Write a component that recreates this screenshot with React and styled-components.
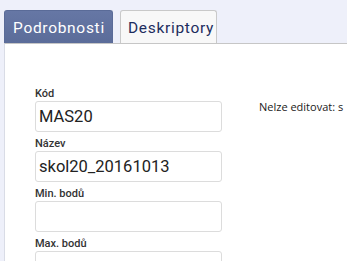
import styled, { createGlobalStyle } from 'styled-components';

const GlobalStyle = createGlobalStyle`
  html, body {
    margin: 0;
    padding: 0;
    background: #eef0fa;
  }
  body {
    font-family: Roboto, 'Liberation Sans', sans-serif;
  }
`;

const Page = styled.div`
  width: 347px;
  height: 261px;
  overflow: hidden;
  display: flex;
  flex-direction: column;
  padding-top: 10px;
  box-sizing: border-box;
`;

const TabBar = styled.div`
  display: flex;
  gap: 7px;
  padding-left: 4px;
`;

const Tab = styled.div`
  height: 33px;
  box-sizing: border-box;
  padding: 1px 0 0 ${(p) => (p.$active ? '8px' : '7px')};
  width: ${(p) => (p.$active ? '109px' : '97px')};
  display: flex;
  align-items: center;
  border-radius: 3px 3px 0 0;
  font-size: 15.5px;
  letter-spacing: 0.7px;
  background: ${(p) => (p.$active ? 'linear-gradient(#6677a5, #5b6c99)' : '#f8f8f8')};
  color: ${(p) => (p.$active ? '#ffffff' : '#1d2d5e')};
  border: 1px solid ${(p) => (p.$active ? '#5a6b98' : '#c9c9c9')};
  border-bottom: none;
`;

const Panel = styled.div`
  flex: 1;
  margin-left: 4px;
  background: #fff;
  border-top: 1px solid #c6c6c6;
  border-left: 1px solid #d9dce6;
  display: flex;
  padding: 44px 0 0 30px;
  gap: 37px;
`;

const Form = styled.div`
  display: flex;
  flex-direction: column;
  gap: 6px;
  width: 187px;
`;

const Label = styled.div`
  font-size: 11px;
  font-weight: 500;
  color: #333;
  height: 12px;
  line-height: 12px;
  margin-bottom: 1px;
`;

const Input = styled.div`
  height: 31px;
  box-sizing: border-box;
  border: 1px solid #dcdcdc;
  border-radius: 3px;
  padding: 0 3px;
  display: flex;
  align-items: center;
  font-size: 16.5px;
  color: #222;
`;

const Note = styled.div`
  margin-top: 11px;
  font-family: 'Open Sans', 'Noto Sans', sans-serif;
  font-size: 11px;
  color: #1a1a1a;
  white-space: nowrap;
`;

const fields = [
  { label: 'Kód', value: 'MAS20' },
  { label: 'Název', value: 'skol20_20161013' },
  { label: 'Min. bodů', value: '' },
  { label: 'Max. bodů', value: '' },
];

export default function App() {
  return (
    <>
      <GlobalStyle />
      <Page>
        <TabBar>
          <Tab $active>Podrobnosti</Tab>
          <Tab>Deskriptory</Tab>
        </TabBar>
        <Panel>
          <Form>
            {fields.map((f) => (
              <div key={f.label}>
                <Label>{f.label}</Label>
                <Input>{f.value}</Input>
              </div>
            ))}
          </Form>
          <Note>Nelze editovat: s</Note>
        </Panel>
      </Page>
    </>
  );
}
